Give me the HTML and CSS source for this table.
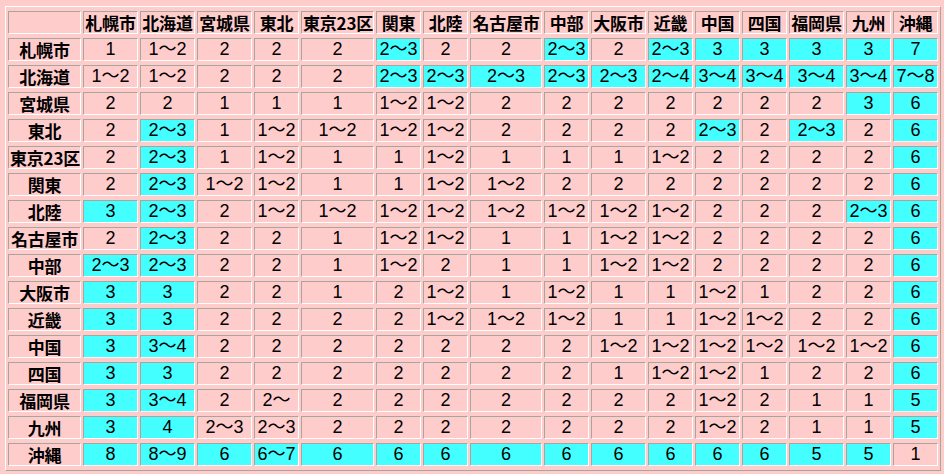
FILE: index.html
```html
<!DOCTYPE html>
<html lang="ja">
<head>
<meta charset="utf-8">
<title>table</title>
<link rel="stylesheet" href="styles.css">
</head>
<body>
<table class="grid">
<tr>
<th class="w73"></th><th class="w55">札幌市</th><th class="w55">北海道</th><th class="w55">宮城県</th><th class="w45">東北</th><th class="w73">東京23区</th><th class="w45">関東</th><th class="w45">北陸</th><th class="w72">名古屋市</th><th class="w45">中部</th><th class="w55">大阪市</th><th class="w45">近畿</th><th class="w45">中国</th><th class="w45">四国</th><th class="w55">福岡県</th><th class="w45">九州</th><th class="w45">沖縄</th>
</tr>
<tr><th>札幌市</th><td>1</td><td>1～2</td><td>2</td><td>2</td><td>2</td><td class="c">2～3</td><td>2</td><td>2</td><td class="c">2～3</td><td>2</td><td class="c">2～3</td><td class="c">3</td><td class="c">3</td><td class="c">3</td><td class="c">3</td><td class="c">7</td></tr>
<tr><th>北海道</th><td>1～2</td><td>1～2</td><td>2</td><td>2</td><td>2</td><td class="c">2～3</td><td class="c">2～3</td><td class="c">2～3</td><td class="c">2～3</td><td class="c">2～3</td><td class="c">2～4</td><td class="c">3～4</td><td class="c">3～4</td><td class="c">3～4</td><td class="c">3～4</td><td class="c">7～8</td></tr>
<tr><th>宮城県</th><td>2</td><td>2</td><td>1</td><td>1</td><td>1</td><td>1～2</td><td>1～2</td><td>2</td><td>2</td><td>2</td><td>2</td><td>2</td><td>2</td><td>2</td><td class="c">3</td><td class="c">6</td></tr>
<tr><th>東北</th><td>2</td><td class="c">2～3</td><td>1</td><td>1～2</td><td>1～2</td><td>1～2</td><td>1～2</td><td>2</td><td>2</td><td>2</td><td>2</td><td class="c">2～3</td><td>2</td><td class="c">2～3</td><td>2</td><td class="c">6</td></tr>
<tr><th>東京23区</th><td>2</td><td class="c">2～3</td><td>1</td><td>1～2</td><td>1</td><td>1</td><td>1～2</td><td>1</td><td>1</td><td>1</td><td>1～2</td><td>2</td><td>2</td><td>2</td><td>2</td><td class="c">6</td></tr>
<tr><th>関東</th><td>2</td><td class="c">2～3</td><td>1～2</td><td>1～2</td><td>1</td><td>1</td><td>1～2</td><td>1～2</td><td>2</td><td>2</td><td>2</td><td>2</td><td>2</td><td>2</td><td>2</td><td class="c">6</td></tr>
<tr><th>北陸</th><td class="c">3</td><td class="c">2～3</td><td>2</td><td>1～2</td><td>1～2</td><td>1～2</td><td>1～2</td><td>1～2</td><td>1～2</td><td>1～2</td><td>1～2</td><td>2</td><td>2</td><td>2</td><td class="c">2～3</td><td class="c">6</td></tr>
<tr><th>名古屋市</th><td>2</td><td class="c">2～3</td><td>2</td><td>2</td><td>1</td><td>1～2</td><td>1～2</td><td>1</td><td>1</td><td>1～2</td><td>1～2</td><td>2</td><td>2</td><td>2</td><td>2</td><td class="c">6</td></tr>
<tr><th>中部</th><td class="c">2～3</td><td class="c">2～3</td><td>2</td><td>2</td><td>1</td><td>1～2</td><td>2</td><td>1</td><td>1</td><td>1～2</td><td>1～2</td><td>2</td><td>2</td><td>2</td><td>2</td><td class="c">6</td></tr>
<tr><th>大阪市</th><td class="c">3</td><td class="c">3</td><td>2</td><td>2</td><td>1</td><td>2</td><td>1～2</td><td>1</td><td>1～2</td><td>1</td><td>1</td><td>1～2</td><td>1</td><td>2</td><td>2</td><td class="c">6</td></tr>
<tr><th>近畿</th><td class="c">3</td><td class="c">3</td><td>2</td><td>2</td><td>2</td><td>2</td><td>1～2</td><td>1～2</td><td>1～2</td><td>1</td><td>1</td><td>1～2</td><td>1～2</td><td>2</td><td>2</td><td class="c">6</td></tr>
<tr><th>中国</th><td class="c">3</td><td class="c">3～4</td><td>2</td><td>2</td><td>2</td><td>2</td><td>2</td><td>2</td><td>2</td><td>1～2</td><td>1～2</td><td>1～2</td><td>1～2</td><td>1～2</td><td>1～2</td><td class="c">6</td></tr>
<tr><th>四国</th><td class="c">3</td><td class="c">3</td><td>2</td><td>2</td><td>2</td><td>2</td><td>2</td><td>2</td><td>2</td><td>1</td><td>1～2</td><td>1～2</td><td>1</td><td>2</td><td>2</td><td class="c">6</td></tr>
<tr><th>福岡県</th><td class="c">3</td><td class="c">3～4</td><td>2</td><td>2～</td><td>2</td><td>2</td><td>2</td><td>2</td><td>2</td><td>2</td><td>2</td><td>1～2</td><td>2</td><td>1</td><td>1</td><td class="c">5</td></tr>
<tr><th>九州</th><td class="c">3</td><td class="c">4</td><td>2～3</td><td>2～3</td><td>2</td><td>2</td><td>2</td><td>2</td><td>2</td><td>2</td><td>2</td><td>1～2</td><td>2</td><td>1</td><td>1</td><td class="c">5</td></tr>
<tr><th>沖縄</th><td class="c">8</td><td class="c">8～9</td><td class="c">6</td><td class="c">6～7</td><td class="c">6</td><td class="c">6</td><td class="c">6</td><td class="c">6</td><td class="c">6</td><td class="c">6</td><td class="c">6</td><td class="c">6</td><td class="c">6</td><td class="c">5</td><td class="c">5</td><td>1</td></tr>
</table>
<div class="note">補足</div>
</body>
</html>
```
FILE: styles.css
```css
html, body {
  margin: 0;
  background: #ffcccc;
}
body {
  padding: 6px 0 0 5px;
  color: #000;
  font-family: "Liberation Sans", "Noto Sans CJK JP", sans-serif;
}
.grid {
  width: 936px;
  table-layout: fixed;
  border-collapse: separate;
  border-spacing: 2px 4px;
  border-style: solid;
  border-width: 1px;
  border-color: #ffffff #a8a59c #a8a59c #ffffff;
}
.grid th, .grid td {
  box-sizing: border-box;
  height: 23px;
  padding: 0 1px;
  border-style: solid;
  border-width: 1px;
  border-color: #a8a59c #ffffff #ffffff #a8a59c;
  text-align: center;
  vertical-align: middle;
  white-space: nowrap;
  overflow: hidden;
  line-height: 21px;
}
.grid th {
  font-family: "Noto Sans CJK JP", sans-serif;
  font-weight: bold;
  font-size: 17px;
  letter-spacing: -0.2px;
}
.grid td {
  font-size: 18px;
  background: #ffcccc;
}
.grid td.c {
  background: #44ffff;
}
.w73 { width: 73px; }
.w72 { width: 72px; }
.w55 { width: 55px; }
.w45 { width: 45px; }
.note {
  font-family: "Noto Sans CJK JP", sans-serif;
  font-size: 17px;
  line-height: 20px;
  margin-top: 1px;
}
```
